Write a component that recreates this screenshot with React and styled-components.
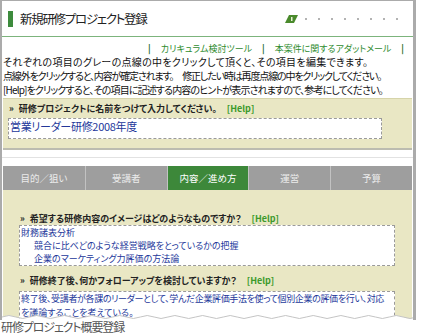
import React from "react";
import styled, { createGlobalStyle } from "styled-components";

const GlobalStyle = createGlobalStyle`
  html, body {
    margin: 0;
    padding: 0;
    background: #fff;
  }
  body {
    font-family: "Noto Sans CJK JP", "Noto Sans", sans-serif;
    font-feature-settings: "palt";
  }
`;

const tabs = ["目的／狙い", "受講者", "内容／進め方", "運営", "予算"];

// torn-paper edge across the bottom of the screenshot
const wave =
  "M0 5 Q7 2 14 5 " +
  Array.from({ length: 29 })
    .map((_, i) => `T${28 + i * 14} 5`)
    .join(" ");

export default function App() {
  return (
    <Page>
      <GlobalStyle />
      <Shot>
        <Header>
          <TitleMark />
          <Title>新規研修プロジェクト登録</Title>
          <Steps>
            <svg width="13" height="8" viewBox="0 0 13 8">
              <polygon points="4,0 13,0 9,8 0,8" fill="#4a8a2c" />
              <rect x="6" y="2" width="1.5" height="4" fill="#e8f0d8" />
            </svg>
            {Array.from({ length: 8 }).map((_, i) => (
              <Dot key={i} />
            ))}
          </Steps>
        </Header>

        <LinkBar>
          <Sep>|</Sep>
          <span>カリキュラム検討ツール</span>
          <Sep>|</Sep>
          <span>本案件に関するアダットメール</span>
          <Sep>|</Sep>
        </LinkBar>

        <Instructions>
          <Para $spacing={0.3}>
            それぞれの項目のグレーの点線の中をクリックして頂くと、その項目を編集できます。
          </Para>
          <Para $spacing={-1.15}>
            点線外をクリックすると、内容が確定されます。　修正したい時は再度点線の中をクリックしてください。
          </Para>
          <Para $spacing={-0.85}>
            [Help]をクリックすると、その項目に記述する内容のヒントが表示されますので、参考にしてください。
          </Para>
        </Instructions>

        <NameSection>
          <SectionHead>
            <Mark>»</Mark>研修プロジェクトに名前をつけて入力してください。<Help>[Help]</Help>
          </SectionHead>
          <NameBox>営業リーダー研修2008年度</NameBox>
        </NameSection>

        <Divider />

        <Tabs>
          {tabs.map((t) => (
            <Tab key={t} $active={t === "内容／進め方"}>
              {t}
            </Tab>
          ))}
        </Tabs>

        <Content>
          <QuestionHead>
            <Mark>»</Mark>希望する研修内容のイメージはどのようなものですか？<Help>[Help]</Help>
          </QuestionHead>
          <AnswerBox $gap={0} $lh={13}>
            <Line>財務諸表分析</Line>
            <Line $indent>競合に比べどのような経営戦略をとっているかの把握</Line>
            <Line $indent>企業のマーケティング力評価の方法論</Line>
          </AnswerBox>

          <QuestionHead $top={9}>
            <Mark>»</Mark>研修終了後、何かフォローアップを検討していますか？<Help>[Help]</Help>
          </QuestionHead>
          <AnswerBox $gap={4} $lh={14}>
            <Line $spacing={-0.35}>
              終了後、受講者が各課のリーダーとして、学んだ企業評価手法を使って個別企業の評価を行い、対応
            </Line>
            <Line>を議論することを考えている。</Line>
          </AnswerBox>
        </Content>

        <Tear viewBox="0 0 416 8" preserveAspectRatio="none">
          <path d={`${wave} L420 8 L0 8 Z`} fill="#fff" />
          <path d={wave} fill="none" stroke="#c4c4c4" strokeWidth="1" />
        </Tear>
      </Shot>
      <Caption>研修プロジェクト概要登録</Caption>
    </Page>
  );
}

const Page = styled.div`
  width: 433px;
  height: 334px;
  overflow: hidden;
  background: #fff;
`;

const Shot = styled.div`
  position: relative;
  width: 416px;
  height: 320px;
  box-sizing: border-box;
  border-style: solid;
  border-color: #ababab;
  border-width: 1px 3px 0 2px;
  overflow: hidden;
  background: #fff;
`;

const Header = styled.div`
  display: flex;
  align-items: center;
  height: 35px;
  padding-left: 6px;
  border-bottom: 1px solid #7cb47c;
`;

const TitleMark = styled.div`
  width: 5px;
  height: 16px;
  background: #3d8b3d;
  margin-right: 7px;
`;

const Title = styled.div`
  font-size: 12.5px;
  color: #222;
  letter-spacing: -1.3px;
`;

const Steps = styled.div`
  margin-left: auto;
  margin-right: 15px;
  display: flex;
  align-items: center;
  gap: 11px;
  svg {
    margin-right: -4px;
  }
`;

const Dot = styled.span`
  width: 2px;
  height: 2px;
  border-radius: 50%;
  background: #9a9a9a;
`;

const LinkBar = styled.div`
  display: flex;
  justify-content: flex-end;
  align-items: center;
  gap: 10px;
  height: 14px;
  margin-top: 4px;
  padding-right: 9px;
  font-size: 9px;
  color: #2e8b2e;
`;

const Sep = styled.span`
  color: #236b23;
  font-weight: bold;
`;

const Instructions = styled.div`
  padding: 0 0 0 1px;
  font-size: 10px;
  line-height: 14px;
  color: #111;
`;

const Para = styled.p`
  margin: 0;
  white-space: nowrap;
  letter-spacing: ${(p) => p.$spacing}px;
`;

const NameSection = styled.div`
  margin: 1px 1px 0 1px;
  padding: 3px 30px 9px 5px;
  background: #e9e7c4;
  border-top: 1px solid #d6d4aa;
  border-bottom: 2px solid #bcbcb0;
`;

const Mark = styled.span`
  margin-right: 5px;
`;

const SectionHead = styled.div`
  font-size: 9px;
  font-weight: bold;
  line-height: 14px;
  color: #222;
  padding-left: 1px;
  white-space: nowrap;
`;

const Help = styled.span`
  color: #3c9a2c;
  margin-left: 10px;
`;

const NameBox = styled.div`
  margin-top: 2px;
  height: 19px;
  border: 1px dashed #9a9a9a;
  background: #fff;
  padding-left: 1px;
  font-size: 11px;
  line-height: 15px;
  letter-spacing: -0.3px;
  color: #23379a;
`;

const Divider = styled.div`
  height: 16px;
  background: linear-gradient(#fff 7px, #e2e2e2 7px, #e2e2e2 8px, #fff 8px);
`;

const Tabs = styled.div`
  display: grid;
  grid-template-columns: repeat(5, 1fr);
  height: 24px;
  margin: 0 1px;
`;

const Tab = styled.div`
  display: flex;
  align-items: center;
  justify-content: center;
  font-size: 9.5px;
  color: ${(p) => (p.$active ? "#fff" : "#ececec")};
  background: ${(p) => (p.$active ? "#3d883a" : "#9e9e9e")};
  border-left: 1px solid #c2c2c2;
  &:first-child {
    border-left: none;
  }
`;

const Content = styled.div`
  height: 200px;
  margin: 0 1px;
  padding: 23px 17px 0 16px;
  background: #e9e7c4;
`;

const QuestionHead = styled.div`
  margin-top: ${(p) => p.$top || 0}px;
  font-size: 9px;
  font-weight: bold;
  line-height: 12px;
  color: #222;
  padding-left: 1px;
  white-space: nowrap;
`;

const AnswerBox = styled.div`
  margin-top: ${(p) => p.$gap}px;
  border: 1px dashed #9a9a9a;
  background: #fff;
  padding: 0 0 0 1px;
  font-size: 9px;
  line-height: ${(p) => p.$lh}px;
  color: #23379a;
`;

const Line = styled.div`
  padding-left: ${(p) => (p.$indent ? 13 : 0)}px;
  letter-spacing: ${(p) => p.$spacing || 0}px;
  white-space: nowrap;
`;

const Tear = styled.svg`
  position: absolute;
  left: 0;
  bottom: 0;
  width: 100%;
  height: 8px;
`;

const Caption = styled.div`
  font-size: 12px;
  line-height: 14px;
  color: #555;
  padding-left: 1px;
  letter-spacing: -1.1px;
`;
